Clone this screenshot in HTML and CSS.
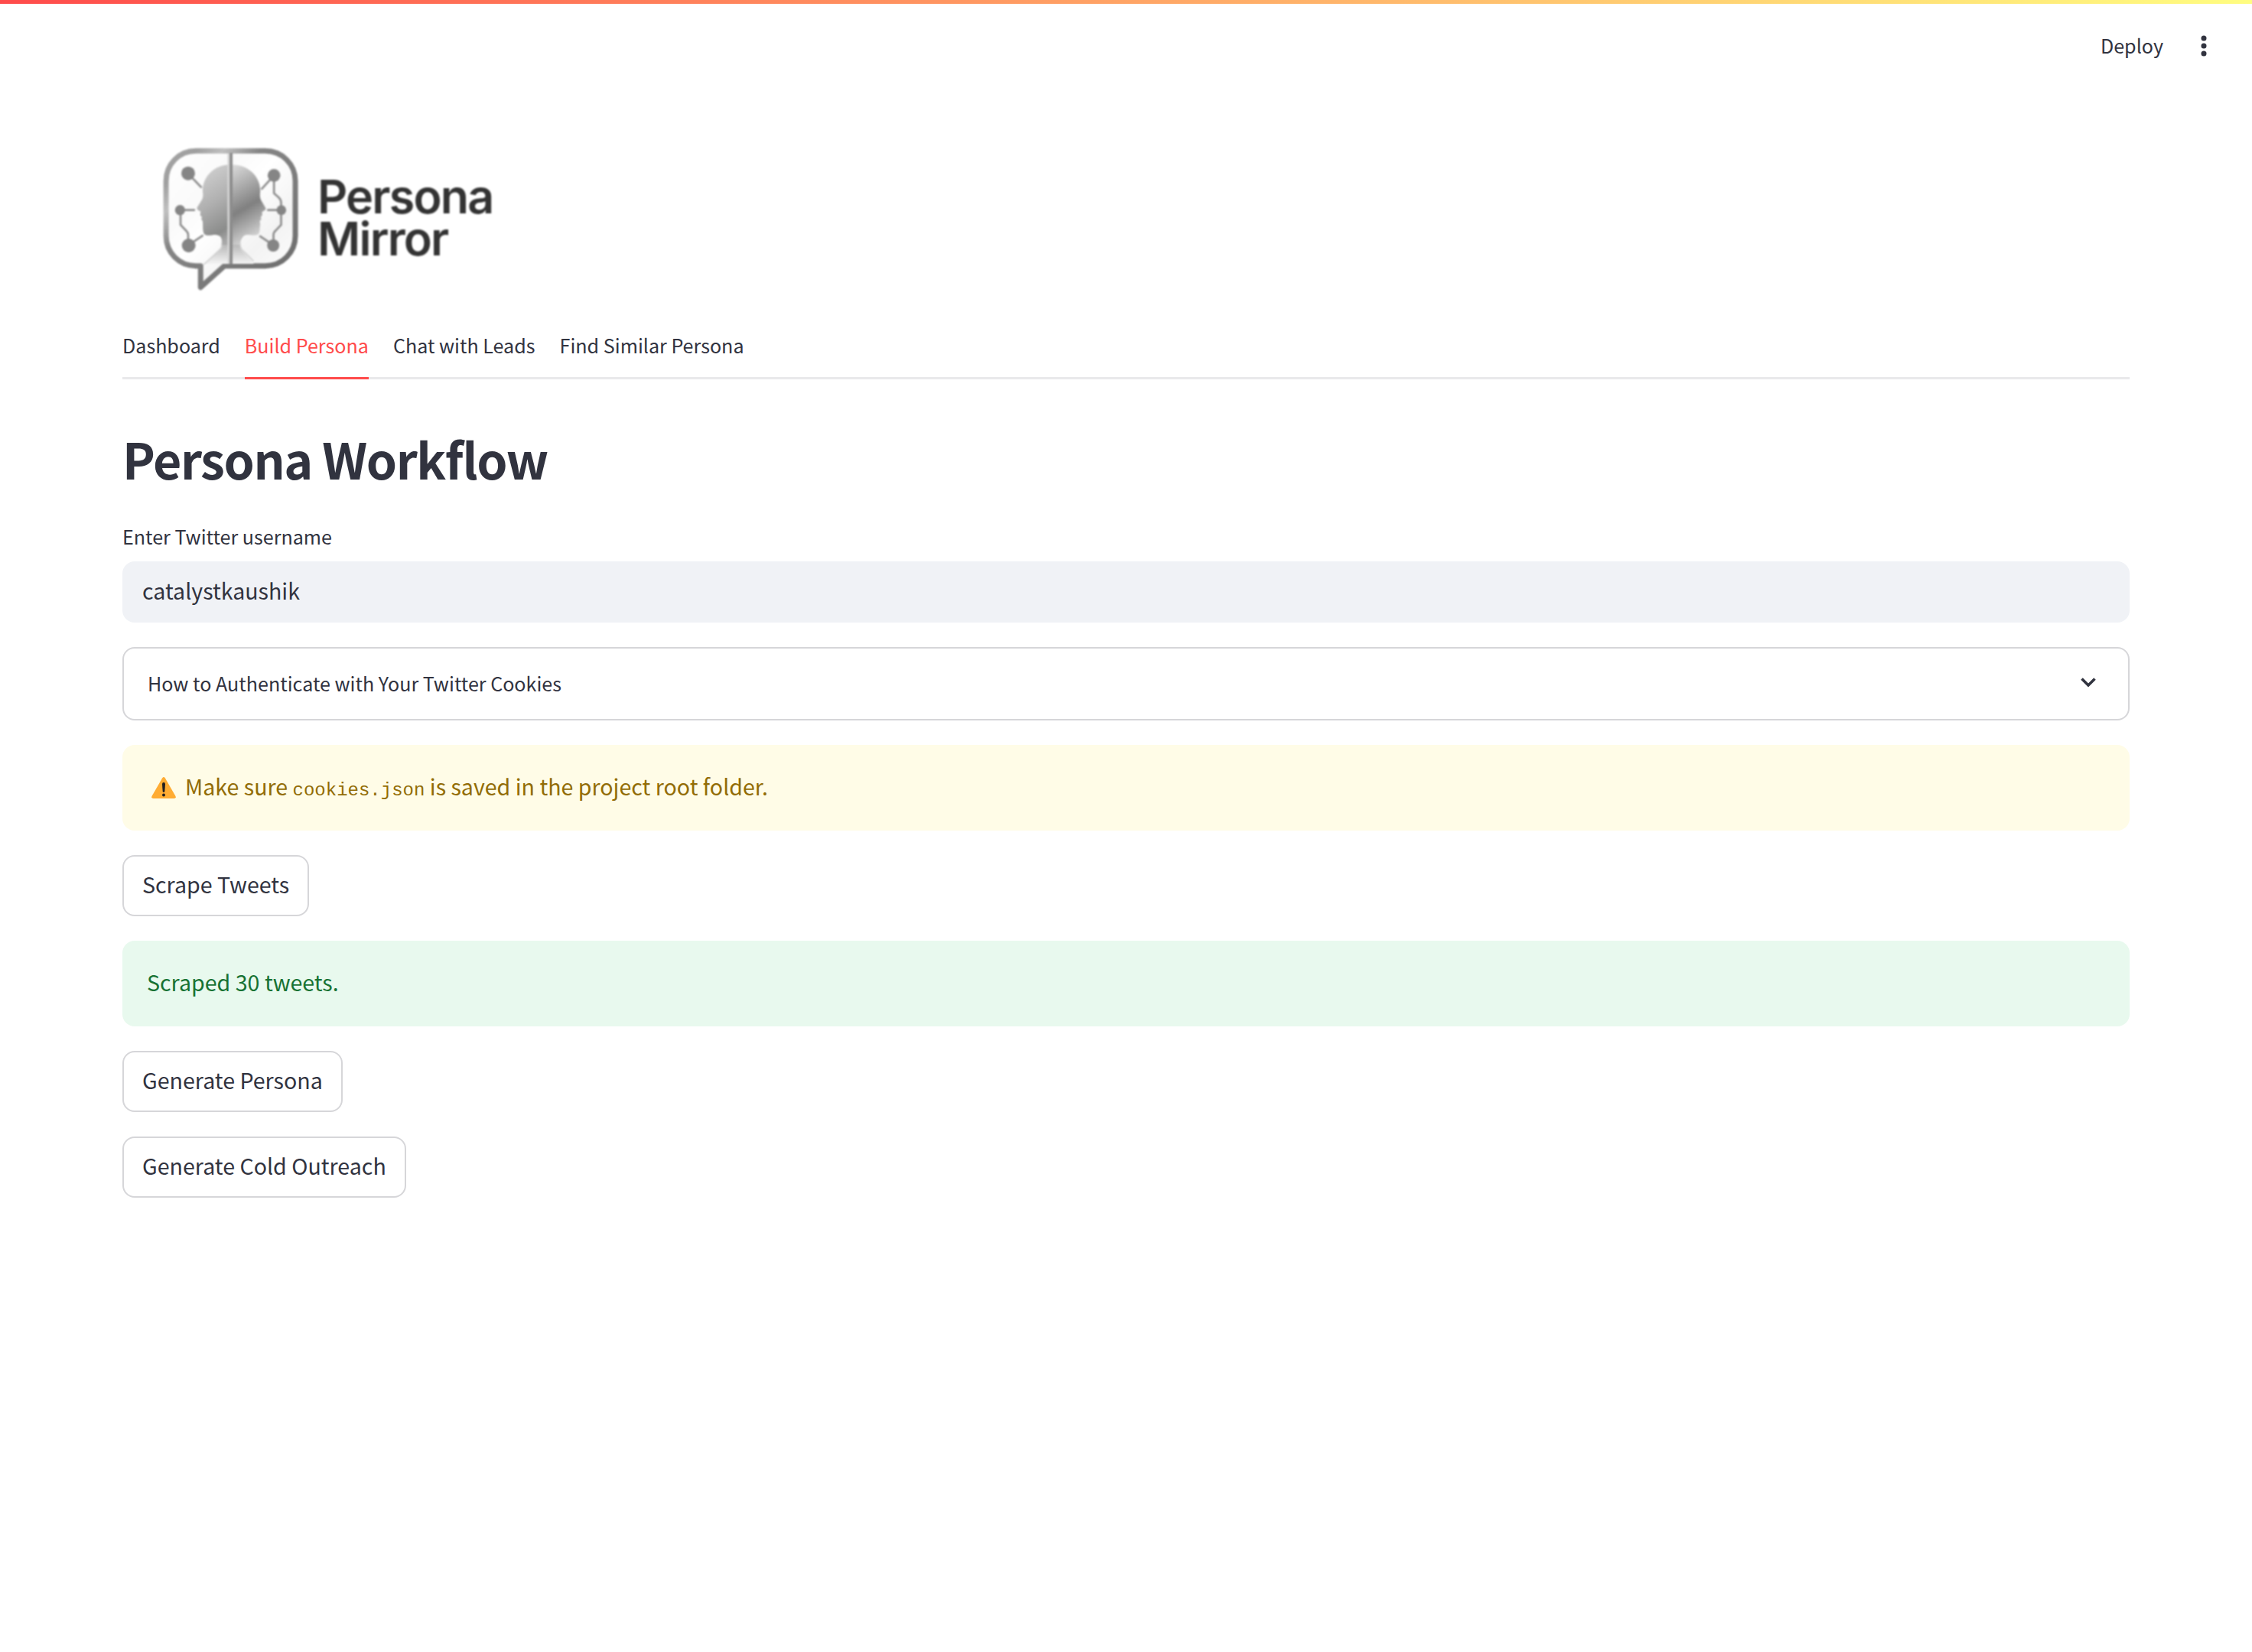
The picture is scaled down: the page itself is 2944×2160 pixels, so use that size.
FILE: index.html
```html
<!DOCTYPE html>
<html lang="en">
<head>
<meta charset="utf-8">
<title>Persona Mirror</title>
<link rel="stylesheet" href="styles.css">
</head>
<body>
<div class="decoration"></div>
<header class="toolbar">
  <span class="deploy">Deploy</span>
  <svg class="menu" viewBox="0 0 8 28"><circle cx="4" cy="4" r="3.5"/><circle cx="4" cy="14" r="3.5"/><circle cx="4" cy="24" r="3.5"/></svg>
</header>
<main class="page">
  <div class="logo">
    <svg class="logo-mark" viewBox="30 0 732 690" preserveAspectRatio="none">
      <defs>
        <linearGradient id="frame" x1="0" y1="0" x2="1" y2="1">
          <stop offset="0" stop-color="#a2a2a2"/><stop offset=".12" stop-color="#a0a0a0"/><stop offset=".22" stop-color="#c0c0c0"/><stop offset=".36" stop-color="#858585"/><stop offset=".6" stop-color="#7c7c7c"/><stop offset="1" stop-color="#6a6a6a"/>
        </linearGradient>
        <linearGradient id="glass" x1="0" y1="0" x2="1" y2="1">
          <stop offset="0" stop-color="#fff"/><stop offset=".3" stop-color="#fafafa"/><stop offset=".45" stop-color="#fff"/><stop offset=".7" stop-color="#f3f3f3"/><stop offset="1" stop-color="#fff"/>
        </linearGradient>
        <linearGradient id="headLeft" gradientUnits="userSpaceOnUse" x1="330" y1="170" x2="480" y2="410">
          <stop offset="0" stop-color="#cfcfcf"/><stop offset=".45" stop-color="#b0b0b0"/><stop offset=".85" stop-color="#8b8c8b"/><stop offset="1" stop-color="#a8a8a8"/>
        </linearGradient>
        <linearGradient id="headRight" gradientUnits="userSpaceOnUse" x1="440" y1="140" x2="590" y2="400">
          <stop offset="0" stop-color="#e0e0e0"/><stop offset=".3" stop-color="#b0b0b0"/><stop offset=".6" stop-color="#808080"/><stop offset=".82" stop-color="#adadad"/><stop offset="1" stop-color="#d5d5d5"/>
        </linearGradient>
        <linearGradient id="neck" x1="0" y1="0" x2="0" y2="1">
          <stop offset="0" stop-color="#a2a2a2"/><stop offset=".4" stop-color="#bcbcbc"/><stop offset="1" stop-color="#f4f4f4"/>
        </linearGradient>
      </defs>
      <path fill="url(#glass)" stroke="url(#frame)" stroke-width="21" stroke-linejoin="round" d="M320 82H592C660 82 711 135 711 200V415C711 480 660 533 592 533H432L338 617V533H320C252 533 202 480 202 415V200C202 135 252 82 320 82Z"/>
      <path fill="url(#neck)" d="M400 408C422 412 424 430 420 460L352 525H548L498 470C490 450 492 418 520 408Z"/>
      <path class="shoulder" d="M350 528L416 468Q423 458 422 440M546 514L498 466Q493 455 493 440"/>
      <path fill="url(#headLeft)" d="M458 136C396 134 346 180 346 240C350 262 345 272 338 282L325 302C321 311 329 316 338 319L336 334L343 341L341 350L346 358C348 376 345 396 352 408C362 418 380 411 398 411C424 414 426 434 422 450H458Z"/>
      <path fill="url(#headRight)" d="M458 136C522 134 574 180 573 240C570 262 573 270 580 282L594 306C596 313 590 317 580 321L581 334L575 341L577 350L571 357L573 372C570 386 573 398 566 408C556 416 536 411 520 411C496 414 492 434 494 450H458Z"/>
      <path class="mirror-light" d="M448 92V524"/>
      <path class="mirror" d="M458 90V526"/>
      <path class="circuit" d="M288 170L342 226M257 314H316M259 314V372L282 396Q289 402 289 412V452L348 413M627 178L577 233M627 178V248L645 264Q655 273 655 285V314H600M655 314V372L634 394Q625 402 625 412V452L570 415"/>
      <g class="nodes"><circle cx="289" cy="170" r="27"/><circle cx="257" cy="314" r="20"/><circle cx="291" cy="453" r="27"/><circle cx="627" cy="178" r="25"/><circle cx="656" cy="314" r="19"/><circle cx="624" cy="453" r="24"/></g>
    </svg>
    <div class="logo-name">Persona<br>Mirror</div>
  </div>
  <nav class="tabs">
    <span class="tab">Dashboard</span>
    <span class="tab active">Build Persona</span>
    <span class="tab">Chat with Leads</span>
    <span class="tab">Find Similar Persona</span>
  </nav>
  <h1>Persona Workflow</h1>
  <label class="label">Enter Twitter username</label>
  <div class="stack">
    <div class="input">catalystkaushik</div>
    <div class="expander">How to Authenticate with Your Twitter Cookies
      <svg class="chevron" viewBox="0 0 24 16"><path d="M3.5 3.5L12 12L20.5 3.5"/></svg>
    </div>
    <div class="alert warning">
      <svg class="caution" viewBox="0 0 32 28"><path fill="#ffac33" d="M14.2 1.3Q16-1.2 17.8 1.3L31.5 25Q32.6 28 29.5 28H2.5Q-.6 28 .5 25Z"/><path fill="#231f20" d="M14 9.2Q14 7 16 7T18 9.2L17.3 19Q16 21 14.7 19Z"/><circle cx="16" cy="23.5" r="2" fill="#231f20"/></svg>
      <p>Make sure <code>cookies.json</code> is saved in the project root folder.</p>
    </div>
    <button class="button">Scrape Tweets</button>
    <div class="alert success"><p>Scraped 30 tweets.</p></div>
    <button class="button">Generate Persona</button>
    <button class="button">Generate Cold Outreach</button>
  </div>
</main>
</body>
</html>
```
FILE: styles.css
```css
* { box-sizing: border-box; }
body {
  margin: 0;
  background: #fff;
  color: #31333f;
  font-family: "Noto Sans CJK SC", "Noto Sans", sans-serif;
  font-size: 28.6px;
  line-height: 48px;
}
p, h1 { margin: 0; }
.decoration { height: 5px; background: linear-gradient(90deg, #ff4b4b, #fffd80); }
.toolbar {
  display: flex;
  justify-content: flex-end;
  align-items: center;
  gap: 49px;
  height: 110px;
  padding-right: 59px;
  font-size: 25.1px;
}
.deploy { padding-bottom: 2px; }
.menu { width: 8px; height: 28px; fill: #31333f; }
.page { padding: 55px 160px 0; }
.logo { display: flex; height: 230px; }
.logo-mark { width: 243px; height: 230px; filter: blur(.8px); }
.logo-name {
  padding: 60px 0 0 12px;
  color: #333;
  font: 600 61px/55px Inter, sans-serif;
  letter-spacing: -1.8px;
  filter: blur(.8px);
}
.shoulder { fill: none; stroke: #d0d0d0; stroke-width: 5; }
.mirror { stroke: #8c8c8c; stroke-width: 12; }
.mirror-light { stroke: #d8d8d8; stroke-width: 8; }
.circuit { fill: none; stroke: #8d8d8d; stroke-width: 8; }
.nodes { fill: #858585; }
.tabs {
  display: flex;
  gap: 32px;
  height: 96px;
  border-bottom: 3px solid #e9e9eb;
  font-size: 25.1px;
}
.tab { height: 96px; padding-top: 27px; }
.active { color: #ff4b4b; border-bottom: 3px solid #ff4b4b; }
h1 {
  height: 181px;
  padding-top: 58px;
  font-size: 64.4px;
  line-height: 90px;
  font-weight: 700;
  letter-spacing: -1.4px;
}
.label { display: block; height: 57px; font-size: 25.1px; }
.stack { display: flex; flex-direction: column; align-items: flex-start; gap: 32px; }
.input, .expander, .alert { display: flex; align-items: center; align-self: stretch; border-radius: 16px; }
.input { height: 80px; padding: 0 26px 5px; background: #f0f2f6; }
.expander {
  justify-content: space-between;
  height: 96px;
  padding: 0 40px 2px 31px;
  border: 2px solid #d6d6d9;
  font-size: 25.1px;
}
.chevron { width: 24px; height: 16px; margin-bottom: 2px; fill: none; stroke: #31333f; stroke-width: 3.6; }
.alert { height: 112px; padding: 0 32px; }
.alert p { padding-bottom: 5px; }
.warning { background: #fffce7; color: #926c05; }
.success { background: #e8f9ee; color: #177233; }
.caution { width: 32px; height: 28px; margin: 0 12px 0 6px; }
code { font-family: "Liberation Mono", monospace; font-size: 24px; line-height: 32px; }
.button {
  height: 80px;
  padding: 0 24px 5px;
  border: 2px solid #d6d6d9;
  border-radius: 16px;
  background: #fff;
  color: inherit;
  font: inherit;
}
```
